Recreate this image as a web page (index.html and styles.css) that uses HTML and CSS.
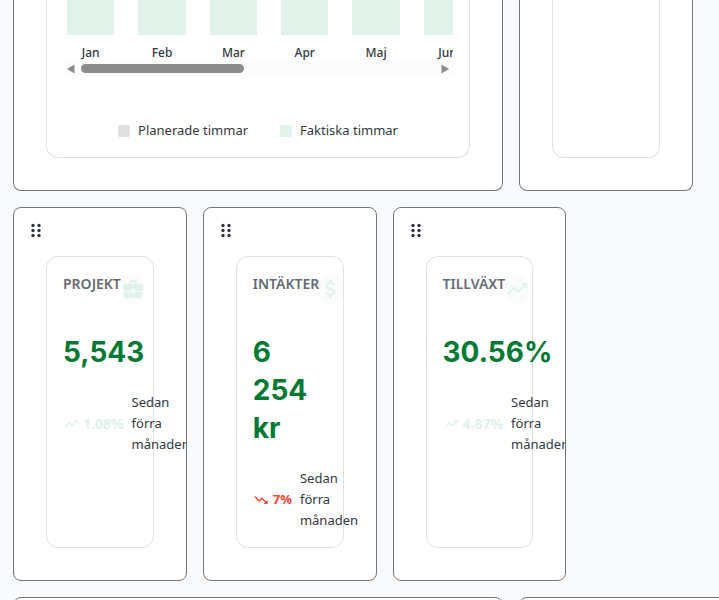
FILE: index.html
```html
<!DOCTYPE html>
<html lang="sv">
<head>
<meta charset="utf-8">
<meta name="viewport" content="width=device-width, initial-scale=1">
<title>Översikt</title>
<link rel="stylesheet" href="styles.css">
</head>
<body>
<svg class="sprite" aria-hidden="true">
  <symbol id="drag" viewBox="0 0 10 14"><circle cx="2" cy="2" r="1.7"/><circle cx="8" cy="2" r="1.7"/><circle cx="2" cy="7" r="1.7"/><circle cx="8" cy="7" r="1.7"/><circle cx="2" cy="12" r="1.7"/><circle cx="8" cy="12" r="1.7"/></symbol>
  <symbol id="up" viewBox="0 0 24 24"><path d="m16 6 2.29 2.29-4.88 4.88-4-4L2 16.59 3.41 18l6-6 4 4 6.3-6.29L22 12V6z"/></symbol>
  <symbol id="down" viewBox="0 0 24 24"><path d="m16 18 2.29-2.29-4.88-4.88-4 4L2 7.41 3.41 6l6 6 4-4 6.3 6.29L22 12v6z"/></symbol>
  <symbol id="case" viewBox="0 0 24 24"><path d="M10 16v-1H3.01L3 19c0 1.11.89 2 2 2h14c1.11 0 2-.89 2-2v-4h-7v1zm10-9h-4.01V5l-2-2h-4l-2 2v2H4c-1.1 0-2 .9-2 2v3c0 1.11.89 2 2 2h6v-2h4v2h6c1.1 0 2-.9 2-2V9c0-1.1-.9-2-2-2m-6 0h-4V5h4z"/></symbol>
  <symbol id="money" viewBox="0 0 24 24"><path d="M11.8 10.9c-2.27-.59-3-1.2-3-2.15 0-1.09 1.01-1.85 2.7-1.85 1.78 0 2.44.85 2.5 2.1h2.21c-.07-1.72-1.12-3.3-3.21-3.81V3h-3v2.16c-1.94.42-3.5 1.68-3.5 3.61 0 2.31 1.91 3.46 4.7 4.13 2.5.6 3 1.48 3 2.41 0 .69-.49 1.79-2.7 1.79-2.06 0-2.87-.92-2.98-2.1h-2.2c.12 2.19 1.76 3.42 3.68 3.83V21h3v-2.15c1.95-.37 3.5-1.5 3.5-3.55 0-2.84-2.43-3.81-4.7-4.4"/></symbol>
</svg>
<main class="dashboard">
  <section class="card card-wide card-open">
    <div class="panel chart">
      <div class="plot">
        <div class="month"><div class="bar"></div><span>Jan</span></div>
        <div class="month"><div class="bar"></div><span>Feb</span></div>
        <div class="month"><div class="bar"></div><span>Mar</span></div>
        <div class="month"><div class="bar"></div><span>Apr</span></div>
        <div class="month"><div class="bar"></div><span>Maj</span></div>
        <div class="month"><div class="bar"></div><span>Jun</span></div>
      </div>
      <div class="scrollbar">
        <svg class="arrow" viewBox="0 0 8 10"><path d="M7.5 .5v9L0 5z"/></svg>
        <div class="track"><div class="thumb"></div></div>
        <svg class="arrow" viewBox="0 0 8 10"><path d="M.5 .5v9L8 5z"/></svg>
      </div>
      <div class="legend">
        <span class="key"><i class="swatch planned"></i>Planerade timmar</span>
        <span class="key"><i class="swatch actual"></i>Faktiska timmar</span>
      </div>
    </div>
  </section>
  <section class="card card-open"><div class="panel"></div></section>

  <section class="card card-start">
    <button class="handle" aria-label="Flytta Projekt"><svg><use href="#drag"/></svg></button>
    <div class="panel">
      <div class="head"><h2>PROJEKT</h2><span class="badge"><svg><use href="#case"/></svg></span></div>
      <p class="value">5,543</p>
      <div class="trend"><span class="change"><svg><use href="#up"/></svg>1.08%</span><span class="since">Sedan förra månaden</span></div>
    </div>
  </section>
  <section class="card">
    <button class="handle" aria-label="Flytta Intäkter"><svg><use href="#drag"/></svg></button>
    <div class="panel">
      <div class="head"><h2>INTÄKTER</h2><span class="badge"><svg><use href="#money"/></svg></span></div>
      <p class="value">6 254 kr</p>
      <div class="trend"><span class="change falling"><svg><use href="#down"/></svg>7%</span><span class="since">Sedan förra månaden</span></div>
    </div>
  </section>
  <section class="card">
    <button class="handle" aria-label="Flytta Tillväxt"><svg><use href="#drag"/></svg></button>
    <div class="panel">
      <div class="head"><h2>TILLVÄXT</h2><span class="badge"><svg><use href="#up"/></svg></span></div>
      <p class="value">30.56%</p>
      <div class="trend"><span class="change"><svg><use href="#up"/></svg>4.87%</span><span class="since">Sedan förra månaden</span></div>
    </div>
  </section>

  <section class="card card-wide card-next"></section>
  <section class="card card-medium card-next"></section>
</main>
</body>
</html>
```
FILE: styles.css
```css
* { box-sizing: border-box; }
html { overflow: hidden; }
body {
  margin: 0;
  padding: 0 13px;
  background: #f9fafc;
  color: #32383e;
  font: 13px/21px "Noto Sans", "Open Sans", sans-serif;
}
svg { fill: currentColor; flex: none; display: block; }
.sprite { position: absolute; width: 0; height: 0; }
.dashboard {
  display: grid;
  grid-template-columns: repeat(12, minmax(0, 1fr));
  gap: 16px;
  margin-right: -50px;
}
.card {
  grid-column: span 3;
  display: flex;
  flex-direction: column;
  min-width: 0;
  padding: 15px 32px 32px;
  overflow: hidden;
  background: #fff;
  border: 1px solid #737679;
  border-radius: 8px;
}
.card-start { grid-column: 1 / span 3; }
.card-wide { grid-column: span 8; }
.card-medium { grid-column: span 4; }
.card-open { padding-top: 0; border-top: 0; border-radius: 0 0 8px 8px; }
.card-next { min-height: 80px; }
.panel {
  flex: 1;
  padding: 16px;
  border: 1px solid #e0e0e0;
  border-radius: 12px;
}
.card-open .panel { padding-top: 0; border-top: 0; border-radius: 0 0 12px 12px; }

.plot { display: flex; overflow: hidden; }
.month {
  flex: 0 0 18.3%;
  padding: 0 20px 0 4px;
  font-size: 12px;
  line-height: 17px;
  font-weight: 500;
  text-align: center;
}
.bar { height: 35px; margin-bottom: 9px; background: #e0f2e9; }
.scrollbar {
  display: flex;
  align-items: center;
  height: 15px;
  padding: 0 4px;
  background: #fcfcfc;
  color: #8b8b8b;
}
.arrow { width: 8px; height: 10px; }
.track { flex: 1; padding: 0 6px; }
.thumb { width: 46%; height: 9px; border-radius: 5px; background: #8b8b8b; }
.legend { display: flex; justify-content: center; gap: 32px; margin-top: 44px; }
.key { display: flex; align-items: center; gap: 8px; }
.swatch { width: 12px; height: 12px; border-radius: 2px; }
.planned { background: #e0e0e0; }
.actual { background: #e0f2e9; }

.handle {
  align-self: flex-start;
  margin: 0 0 18px -15px;
  padding: 0;
  border: 0;
  background: none;
  color: #32383e;
  cursor: grab;
}
.handle svg { width: 10px; height: 15px; }
.head { display: flex; height: 32px; margin-bottom: 28px; }
h2 {
  margin: 0;
  color: #636b74;
  font-size: 14px;
  line-height: 21px;
  font-weight: 600;
}
.badge {
  display: grid;
  place-items: center;
  flex: none;
  width: 24px;
  height: 32px;
  border-radius: 50%;
  background: #f9fcfb;
  color: #e0f2e9;
}
.badge svg { width: 24px; height: 24px; }
.value {
  margin: 0 0 21px;
  color: #007a33;
  font: 700 28px/38px Inter, sans-serif;
}
.trend { display: flex; align-items: center; gap: 8px; }
.change { display: flex; align-items: center; gap: 4px; color: #e0f2e9; font-size: 14px; font-weight: 700; }
.change svg { width: 16px; height: 16px; }
.falling { color: #f44336; font-size: 13px; }
```
